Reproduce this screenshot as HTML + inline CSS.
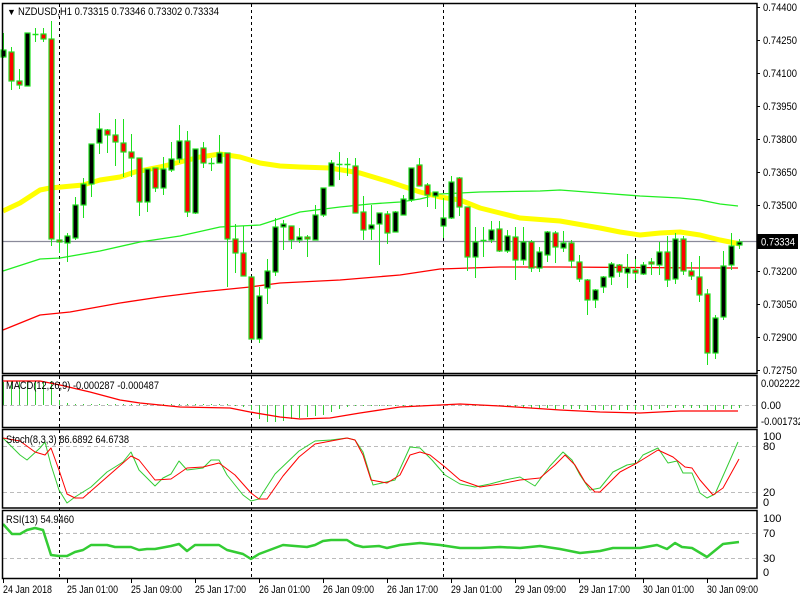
<!DOCTYPE html>
<html><head><meta charset="utf-8"><style>
html,body{margin:0;padding:0;background:#fff;width:800px;height:600px;overflow:hidden}
svg{display:block;font-family:"Liberation Sans","DejaVu Sans",sans-serif;font-size:11px}
</style></head><body>
<svg id="s" width="800" height="600" xmlns="http://www.w3.org/2000/svg">
<rect width="800" height="600" fill="#fff"/>
<g id="grid"></g>
<g id="main"></g>
<g fill="none" stroke="#000" stroke-width="1.5">
<rect x="2.5" y="3.5" width="754.5" height="370"/>
<rect x="2.5" y="375.5" width="754.5" height="52"/>
<rect x="2.5" y="429.5" width="754.5" height="78.5"/>
<rect x="2.5" y="510.5" width="754.5" height="68"/>
</g>
<text x="7" y="15" font-size="9">▼</text>
<text x="18" y="15" textLength="201" lengthAdjust="spacingAndGlyphs">NZDUSD,H1  0.73315 0.73346 0.73302 0.73334</text>
<text x="6" y="389" textLength="153" lengthAdjust="spacingAndGlyphs">MACD(12,26,9) -0.000287 -0.000487</text>
<text x="6" y="443" textLength="123" lengthAdjust="spacingAndGlyphs">Stoch(8,3,3) 86.6892 64.6738</text>
<text x="6" y="523" textLength="68" lengthAdjust="spacingAndGlyphs">RSI(13) 54.9460</text>
<g id="axis" fill="#000"></g>
<rect x="757" y="234" width="41" height="15" fill="#000"/>
<text x="761" y="245.5" fill="#fff" textLength="34" lengthAdjust="spacingAndGlyphs">0.73334</text>
</svg>
<script>
const NS="http://www.w3.org/2000/svg";
function el(p,t,a,txt){const e=document.createElementNS(NS,t);for(const k in a)e.setAttribute(k,a[k]);if(txt)e.textContent=txt;document.getElementById(p).appendChild(e);return e;}
el('grid','line',{x1:3,x2:757,y1:241.5,y2:241.5,stroke:'#8a8a9a','stroke-width':1.2});
[405.5,446.5,492.5,533.5,558.5].forEach(y=>el('grid','line',{x1:3,x2:757,y1:y,y2:y,stroke:'#bbb','stroke-dasharray':'4,3'}));
[59,251,443,635].forEach(x=>el('grid','line',{x1:x+.5,x2:x+.5,y1:4,y2:578,stroke:'#000','stroke-dasharray':'3,3'}));
function poly(p,pts,col,w){el(p,'polyline',{points:pts.map(a=>a.join(',')).join(' '),fill:'none',stroke:col,'stroke-width':w,'stroke-linejoin':'round'});}
poly('main',[[3,330],[40,315],[70,312],[120,303],[160,297],[200,292],[250,287],[280,283],[340,280],[400,275],[440,269],[500,267],[560,267],[700,268],[738,268]],'#f00',1.3);
poly('main',[[3,271],[40,259],[60,258],[100,251],[140,242],[180,236],[220,227],[260,225],[300,212],[340,207],[370,204],[400,202],[420,199],[440,194],[480,192],[540,191],[560,190],[600,193],[640,196],[680,198],[700,200],[720,204],[738,206]],'#2e2',1.3);
poly('main',[[3,211],[20,203],[40,190],[50,188],[83,185],[100,180],[120,177],[135,172],[160,167],[200,157],[220,154],[240,157],[260,163],[280,166],[300,167],[330,168],[360,173],[390,182],[420,192],[440,197],[460,200],[480,208],[500,213],[520,218],[560,221],[600,228],[620,232],[640,235],[660,233],[680,232],[700,235],[720,240],[740,244]],'#ff0',5);
const C=[[0,33,50,57,58,'b'],[1,47,52,81,90,'r'],[2,69,81,85,89,'r'],[3,33,33,86,86,'b'],[4,28,34,35,42,'d'],[5,28,34,39,42,'r'],[6,21,39,239,246,'r'],[7,213,240,242,253,'r'],[8,233,236,243,262,'b'],[9,197,205,238,240,'b'],[10,178,184,205,218,'b'],[11,144,144,184,197,'b'],[12,113,129,143,154,'b'],[13,129,130,135,153,'r'],[14,119,135,142,166,'r'],[15,119,143,152,177,'r'],[16,134,152,158,177,'r'],[17,158,158,202,216,'r'],[18,169,169,202,212,'b'],[19,168,168,188,192,'r'],[20,157,169,188,195,'b'],[21,142,159,170,172,'b'],[22,125,141,159,163,'b'],[23,131,141,212,217,'r'],[24,149,149,213,214,'b'],[25,142,148,163,168,'r'],[26,158,163,163,171,'d'],[27,135,153,163,163,'b'],[28,153,153,239,287,'r'],[29,224,239,253,273,'r'],[30,226,253,276,276,'r'],[31,277,277,339,340,'r'],[32,287,296,339,343,'b'],[33,259,271,288,304,'b'],[34,218,227,272,276,'b'],[35,220,224,227,250,'b'],[36,226,226,240,249,'r'],[37,228,237,240,243,'b'],[38,235,237,239,257,'r'],[39,205,215,240,240,'b'],[40,188,188,215,217,'b'],[41,160,163,186,186,'b'],[42,152,164,164,180,'d'],[43,158,164,164,176,'d'],[44,158,166,213,213,'r'],[45,196,212,230,240,'r'],[46,205,225,229,240,'b'],[47,213,213,224,265,'b'],[48,211,214,233,244,'r'],[49,211,212,232,232,'b'],[50,195,199,215,215,'b'],[51,168,168,200,202,'b'],[52,158,165,186,186,'r'],[53,183,185,195,207,'r'],[54,192,192,196,209,'b'],[55,198,218,226,238,'b'],[56,176,182,218,219,'b'],[57,177,178,207,216,'r'],[58,207,207,257,271,'r'],[59,227,242,257,278,'b'],[60,227,240,240,257,'d'],[61,221,230,240,243,'b'],[62,221,229,251,252,'r'],[63,230,236,251,253,'b'],[64,227,237,260,280,'r'],[65,227,242,260,265,'b'],[66,240,242,268,272,'r'],[67,247,252,268,272,'b'],[68,231,232,255,262,'b'],[69,231,233,247,263,'r'],[70,231,243,248,252,'b'],[71,240,243,261,268,'r'],[72,255,262,279,282,'r'],[73,279,280,300,315,'r'],[74,289,290,300,308,'b'],[75,276,277,287,293,'b'],[76,262,264,277,285,'b'],[77,264,265,272,277,'r'],[78,254,268,273,288,'b'],[79,259,270,273,280,'r'],[80,262,265,274,275,'b'],[81,258,262,264,275,'r'],[82,242,252,265,275,'b'],[83,236,252,280,287,'r'],[84,233,239,279,284,'b'],[85,236,239,271,275,'r'],[86,262,271,276,280,'r'],[87,256,277,295,302,'r'],[88,289,294,353,365,'r'],[89,315,318,353,359,'b'],[90,251,266,317,320,'b'],[91,233,246,265,270,'b'],[92,239,242,245,249,'b']];
const G='#1ee01e';
C.forEach(c=>{const x=3.5+8*c[0];
 el('main','line',{x1:x,x2:x,y1:c[1],y2:c[4],stroke:G,'stroke-width':1});
 if(c[5]=='d'){el('main','line',{x1:x-3,x2:x+3,y1:c[2]+.5,y2:c[2]+.5,stroke:G,'stroke-width':1.5});}
 else{el('main','rect',{x:x-2.5,y:c[2],width:5,height:Math.max(2,c[3]-c[2]),fill:c[5]=='r'?'#f00':'#000',stroke:G,'stroke-width':1.2});}
});
const H=[382,381,381,381,381,381,381,400,403,404,404,404,404,404,404,404,404,404,404,404,404,404,404,404,404,404,404,404,404,406,407,410,419,422,422,421,419,418,417,416,415,412,409,407,406,406,406,406,406,406,406,406,406,406,405,405,405,405,405,406,406,406,406,406,407,407,408,408,408,409,409,409,409,410,410,410,410,410,410,410,410,410,409,408,408,408,408,408,410,410,409,409,408];
H.forEach((h,k)=>{const x=3.5+8*k;el('main','line',{x1:x,x2:x,y1:405,y2:h,stroke:'#3c3','stroke-width':1});});
poly('main',[[3,381],[40,381],[60,385],[90,392],[120,400],[140,403],[180,407],[230,408],[250,412],[280,417],[300,419],[330,418],[360,413],[400,407],[460,404],[500,406],[560,410],[600,412],[640,413],[680,411],[738,411]],'#f00',1.3);
poly('main',[[3,438],[20,455],[27,460],[40,448],[45,442],[51,465],[59,490],[67,503],[75,497],[91,487],[107,472],[123,462],[131,452],[139,470],[155,486],[163,478],[171,474],[179,461],[187,470],[203,468],[211,460],[219,460],[227,475],[243,495],[251,501],[259,499],[275,474],[299,451],[315,441],[331,440],[347,438],[355,440],[363,452],[373,485],[395,480],[410,447],[420,448],[432,460],[445,475],[460,484],[475,487],[490,484],[505,480],[520,477],[535,486],[550,466],[563,452],[572,460],[580,475],[590,490],[600,488],[613,472],[627,465],[637,463],[643,455],[658,448],[668,463],[677,461],[683,473],[692,473],[700,493],[707,498],[715,494],[727,467],[738,442]],'#3c3',1);
poly('main',[[3,438],[20,441],[35,452],[45,455],[51,448],[59,470],[67,494],[75,498],[83,498],[99,484],[115,470],[131,456],[139,460],[155,480],[171,479],[187,468],[203,467],[219,463],[235,475],[251,493],[259,499],[267,499],[283,476],[299,457],[315,444],[331,441],[347,438],[355,440],[363,455],[371,480],[387,483],[400,475],[410,455],[420,452],[430,455],[445,467],[460,480],[480,487],[500,484],[520,480],[540,478],[555,465],[565,455],[575,465],[585,482],[595,492],[600,492],[620,472],[637,463],[658,450],[673,457],[685,467],[692,468],[700,480],[713,495],[723,488],[739,459]],'#f00',1);
poly('main',[[3,524],[12,534],[20,534],[27,530],[35,528],[43,530],[51,555],[59,556],[67,556],[75,552],[83,550],[91,545],[107,545],[115,547],[131,547],[139,550],[147,549],[155,549],[171,546],[179,544],[187,551],[195,545],[219,545],[227,550],[243,554],[251,559],[259,554],[275,548],[283,545],[307,547],[315,545],[323,541],[331,540],[347,540],[355,545],[363,547],[379,546],[387,548],[400,545],[420,543],[440,545],[460,548],[480,548],[500,547],[520,548],[540,546],[560,549],[580,553],[600,551],[613,548],[640,548],[657,545],[667,549],[675,543],[682,547],[692,548],[707,557],[723,544],[739,542]],'#3c3',2.5);
const P=[[7,'0.74400'],[40,'0.74250'],[73,'0.74100'],[106,'0.73950'],[139,'0.73800'],[172,'0.73650'],[205,'0.73500'],[271,'0.73200'],[304,'0.73050'],[337,'0.72900'],[370,'0.72750']];
P.forEach(p=>{el('axis','line',{x1:757,x2:760,y1:p[0]+.5,y2:p[0]+.5,stroke:'#000'});el('axis','text',{x:763,y:p[0]+4,textLength:34,lengthAdjust:'spacingAndGlyphs'},p[1]);});
[[383,'0.002222',39],[405,'0.00',20],[421,'-0.001732',42]].forEach(p=>el('axis','text',{x:761,y:p[0]+4,textLength:p[2],lengthAdjust:'spacingAndGlyphs'},p[1]));
[[436,'100'],[446,'80'],[492,'20'],[502,'0'],[518,'100'],[533,'70'],[558,'30'],[572,'0']].forEach(p=>el('axis','text',{x:763,y:p[0]+4},p[1]));
const T=['24 Jan 2018','25 Jan 01:00','25 Jan 09:00','25 Jan 17:00','26 Jan 01:00','26 Jan 09:00','26 Jan 17:00','29 Jan 01:00','29 Jan 09:00','29 Jan 17:00','30 Jan 01:00','30 Jan 09:00'];
T.forEach((t,i)=>{const x=i==0?3:67+64*(i-1);el('axis','line',{x1:x+.5,x2:x+.5,y1:579,y2:583,stroke:'#000'});el('axis','text',{x:x,y:593,textLength:i==0?49:51,lengthAdjust:'spacingAndGlyphs'},t);});
</script>
</body></html>
